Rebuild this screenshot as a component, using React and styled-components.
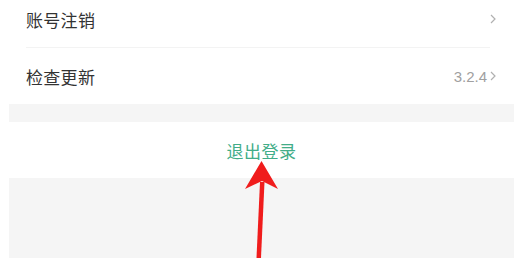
import React from 'react';
import styled, { createGlobalStyle } from 'styled-components';

const GlobalStyle = createGlobalStyle`
  html, body {
    margin: 0;
    padding: 0;
    background: #fff;
  }
  body {
    font-family: "Noto Sans CJK SC", "Liberation Sans", sans-serif;
  }
`;

const Page = styled.div`
  position: relative;
  width: 514px;
  height: 258px;
  overflow: hidden;
  background: #fff;
  padding-left: 9px;
  box-sizing: border-box;
`;

const Column = styled.div`
  display: flex;
  flex-direction: column;
  height: 100%;
`;

const Row = styled.div`
  display: flex;
  align-items: center;
  justify-content: space-between;
  height: ${(p) => p.height}px;
  padding: 0 18px ${(p) => p.bottom || 0}px 17px;
  box-sizing: border-box;
  background: #fff;
`;

const Label = styled.span`
  font-size: 17px;
  color: #333;
  letter-spacing: 0.3px;
`;

const Right = styled.div`
  display: flex;
  align-items: center;
  gap: 3px;
`;

const Version = styled.span`
  font-family: "Liberation Sans", sans-serif;
  font-size: 15px;
  color: #a0a0a0;
`;

const Divider = styled.div`
  height: 1px;
  margin: 0 24px 0 17px;
  background: #f3f3f3;
`;

const Gap = styled.div`
  height: ${(p) => p.height}px;
  background: #f5f5f5;
`;

const Logout = styled.div`
  height: 56px;
  display: flex;
  align-items: center;
  justify-content: center;
  padding-left: 0;
  font-size: 17px;
  color: #42ad88;
  letter-spacing: 0.5px;
  background: #fff;
`;

const Fill = styled.div`
  flex: 1;
  background: #f5f5f5;
`;

const Arrow = styled.svg`
  position: absolute;
  left: 0;
  top: 0;
  pointer-events: none;
`;

const Chevron = () => (
  <svg width="6" height="10" viewBox="0 0 6 10">
    <path d="M1 1 L5 5 L1 9" fill="none" stroke="#b0b0b0" strokeWidth="1.2" />
  </svg>
);

const App = () => (
  <>
    <GlobalStyle />
    <Page>
      <Column>
        <Row height={47} bottom={9}>
          <Label>账号注销</Label>
          <Chevron />
        </Row>
        <Divider />
        <Row height={56}>
          <Label>检查更新</Label>
          <Right>
            <Version>3.2.4</Version>
            <Chevron />
          </Right>
        </Row>
        <Gap height={18} />
        <Logout>退出登录</Logout>
        <Fill />
      </Column>
      <Arrow width="514" height="258" viewBox="0 0 514 258">
        <path d="M256.5 258 L260 182 L264.5 182 L261 258 Z" fill="#f01c1c" />
        <path d="M261.5 161 L278 189 L262 181 L245 189 Z" fill="#f01c1c" />
      </Arrow>
    </Page>
  </>
);

export default App;
